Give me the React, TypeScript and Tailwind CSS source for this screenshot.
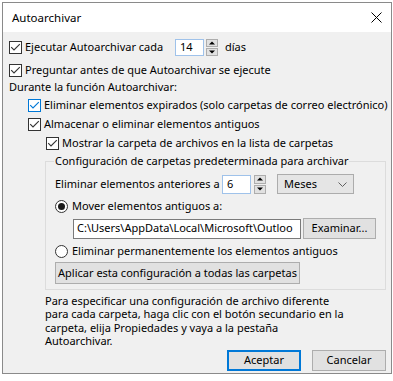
import React from "react";

function Check({ blue }: { blue?: boolean }) {
  return (
    <span
      className={
        blue
          ? "w-[13px] h-[13px] border border-[#0078d7] bg-white flex items-center justify-center shrink-0"
          : "w-[13px] h-[13px] border border-[#333333] bg-white flex items-center justify-center shrink-0"
      }
    >
      <svg width="11" height="11" viewBox="0 0 11 11">
        <path
          d="M1.2 5.2 L4 8 L9.8 2.2"
          stroke={blue ? "#0078d7" : "#333333"}
          strokeWidth="1.1"
          fill="none"
        />
      </svg>
    </span>
  );
}

function Radio({ on }: { on?: boolean }) {
  return (
    <span className="w-[13px] h-[13px] rounded-full border border-[#333333] bg-white flex items-center justify-center shrink-0">
      {on ? <span className="w-[7px] h-[7px] rounded-full bg-[#1a1a1a]" /> : null}
    </span>
  );
}

function Spin({ tall }: { tall?: boolean }) {
  return (
    <span
      className={
        tall
          ? "flex flex-col w-[12px] h-[19px] gap-[1px] shrink-0"
          : "flex flex-col w-[12px] h-[17px] gap-[1px] shrink-0"
      }
    >
      <span className="flex-1 bg-[#e1e1e1] border border-[#adadad] flex items-center justify-center">
        <svg width="6" height="4" viewBox="0 0 6 4">
          <path d="M0 3.5 L3 0.5 L6 3.5 Z" fill="#000" />
        </svg>
      </span>
      <span className="flex-1 bg-[#e1e1e1] border border-[#adadad] flex items-center justify-center">
        <svg width="6" height="4" viewBox="0 0 6 4">
          <path d="M0 0.5 L3 3.5 L6 0.5 Z" fill="#000" />
        </svg>
      </span>
    </span>
  );
}

export default function App() {
  return (
    <div className="w-[393px] h-[381px] bg-white overflow-hidden font-['Segoe_UI','Noto_Sans',sans-serif] text-[11px] text-black">
      <div className="ml-[2px] mt-[2px] w-[390px] h-[372px] border border-[#8a8a8a] flex flex-col">
        {/* Title bar */}
        <div className="h-[29px] bg-white flex items-center justify-between pl-[9px] pr-[8px] shrink-0">
          <span className="leading-none text-[11.5px]">Autoarchivar</span>
          <svg width="11" height="11" viewBox="0 0 11 11" className="mr-[1px]">
            <path d="M0.5 0.5 L10.5 10.5 M10.5 0.5 L0.5 10.5" stroke="#000" strokeWidth="1" />
          </svg>
        </div>
        {/* Body */}
        <div className="flex-1 bg-[#f0f0f0] pl-[6px] pr-[5px] pt-[5px] flex flex-col">
          <div className="h-[20px] flex items-center">
            <div className="w-[166px] shrink-0 flex items-center gap-[3px]">
              <Check />
              <span className="whitespace-nowrap">Ejecutar Autoarchivar cada</span>
            </div>
            <div className="w-[29px] h-[17px] shrink-0 bg-white border border-[#9fc2ea] flex items-center pl-[4px]">
              14
            </div>
            <span className="ml-[2px] shrink-0">
              <Spin />
            </span>
            <span className="ml-[7px]">días</span>
          </div>
          <div className="h-[18px] mt-[4px] flex items-center gap-[3px]">
            <Check />
            <span className="whitespace-nowrap">Preguntar antes de que Autoarchivar se ejecute</span>
          </div>
          <div className="h-[17px] flex items-center">
            <span className="whitespace-nowrap">Durante la función Autoarchivar:</span>
          </div>
          <div className="h-[19px] ml-[19px] flex items-center gap-[3px]">
            <Check blue />
            <span className="whitespace-nowrap">
              Eliminar elementos expirados (solo carpetas de correo electrónico)
            </span>
          </div>
          <div className="h-[19px] ml-[19px] flex items-center gap-[3px]">
            <Check />
            <span className="whitespace-nowrap">Almacenar o eliminar elementos antiguos</span>
          </div>
          <div className="h-[19px] ml-[37px] flex items-center gap-[3px]">
            <Check />
            <span className="whitespace-nowrap">Mostrar la carpeta de archivos en la lista de carpetas</span>
          </div>
          <fieldset className="ml-[36px] w-[341px] border border-[#dcdcdc] pl-[9px] pb-[5px]">
            <legend className="h-[16px] leading-[16px] px-[1px] -ml-[1px] whitespace-nowrap">
              Configuración de carpetas predeterminada para archivar
            </legend>
            <div className="mt-[5px] h-[20px] flex items-center">
              <div className="w-[167px] shrink-0 overflow-visible">
                <span className="whitespace-nowrap">Eliminar elementos anteriores a</span>
              </div>
              <div className="w-[29px] h-[19px] shrink-0 bg-white border border-[#9fc2ea] flex items-center pl-[4px]">
                6
              </div>
              <span className="ml-[3px] shrink-0">
                <Spin tall />
              </span>
              <div className="ml-[11px] w-[77px] h-[20px] shrink-0 bg-[#e5e5e5] border border-[#acacac] flex items-center justify-between pl-[6px] pr-[6px]">
                <span>Meses</span>
                <svg width="9" height="5" viewBox="0 0 9 5">
                  <path d="M0.5 0.5 L4.5 4.5 L8.5 0.5" stroke="#606060" strokeWidth="1" fill="none" />
                </svg>
              </div>
            </div>
            <div className="mt-[3px] h-[18px] flex items-center gap-[4px]">
              <Radio on />
              <span className="whitespace-nowrap">Mover elementos antiguos a:</span>
            </div>
            <div className="mt-[3px] h-[21px] flex items-center pl-[18px]">
              <div className="w-[228px] h-[20px] shrink-0 bg-white border border-[#7a7a7a] flex items-center pl-[3px] overflow-hidden whitespace-nowrap">
                C:\Users\AppData\Local\Microsoft\Outloo
              </div>
              <div className="ml-[2px] w-[73px] h-[21px] shrink-0 bg-[#e1e1e1] border border-[#adadad] flex items-center justify-center">
                Examinar...
              </div>
            </div>
            <div className="mt-[3px] h-[18px] flex items-center gap-[4px]">
              <Radio />
              <span className="whitespace-nowrap">Eliminar permanentemente los elementos antiguos</span>
            </div>
            <div className="mt-[2px] w-[245px] h-[22px] bg-[#e1e1e1] border border-[#adadad] flex items-center justify-center whitespace-nowrap">
              Aplicar esta configuración a todas las carpetas
            </div>
          </fieldset>
          <p className="ml-[36px] mt-[4px] leading-[13.4px] whitespace-nowrap">
            Para especificar una configuración de archivo diferente
            <br />
            para cada carpeta, haga clic con el botón secundario en la
            <br />
            carpeta, elija Propiedades y vaya a la pestaña
            <br />
            Autoarchivar.
          </p>
          <div className="mt-[2px] flex justify-end gap-[11px]">
            <div className="w-[74px] h-[21px] bg-[#e1e1e1] border-2 border-[#0078d7] flex items-center justify-center">
              Aceptar
            </div>
            <div className="w-[74px] h-[21px] bg-[#e1e1e1] border border-[#adadad] flex items-center justify-center">
              Cancelar
            </div>
          </div>
        </div>
      </div>
    </div>
  );
}
